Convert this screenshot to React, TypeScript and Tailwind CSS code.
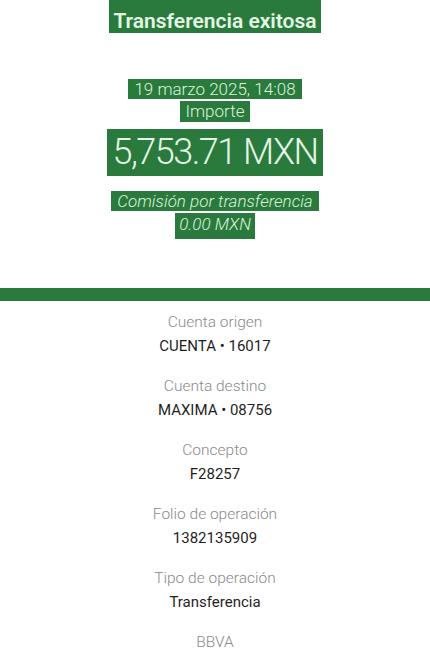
import React from 'react';

const details = [
  { label: 'Cuenta origen', value: 'CUENTA • 16017' },
  { label: 'Cuenta destino', value: 'MAXIMA • 08756' },
  { label: 'Concepto', value: 'F28257' },
  { label: 'Folio de operación', value: '1382135909' },
  { label: 'Tipo de operación', value: 'Transferencia' },
];

export default function App() {
  return (
    <div className="w-[430px] h-[661px] bg-white overflow-hidden flex flex-col items-center font-['Roboto',sans-serif]">
      {/* Header */}
      <span className="bg-[#2a7a3e] text-[#e4f6e4] px-[4px] pt-[10px] pb-[1px] text-[21px] leading-[22px] font-semibold">
        Transferencia exitosa
      </span>

      <span className="mt-[46px] bg-[#2a7a3e] text-[#dcf3dc] px-[6px] text-[17px] leading-[20px] font-light">
        19 marzo 2025, 14:08
      </span>
      <span className="mt-[2px] bg-[#2a7a3e] text-[#dcf3dc] px-[6px] text-[17px] leading-[21px] font-light">
        Importe
      </span>
      <span className="mt-[7px] bg-[#2a7a3e] text-[#e4f6e4] px-[5px] text-[36px] leading-[47px] font-light tracking-[-1.5px]">
        5,753.71 MXN
      </span>

      <span className="mt-[15px] bg-[#2a7a3e] text-[#dcf3dc] px-[6px] text-[17px] leading-[20px] font-light italic">
        Comisión por transferencia
      </span>
      <span className="mt-[2px] bg-[#2a7a3e] text-[#dcf3dc] px-[4px] pb-[4px] text-[17px] leading-[22px] font-light italic">
        0.00 MXN
      </span>

      {/* Divider bar */}
      <div className="mt-[49px] w-full h-[13px] bg-[#2a7a3e]" />

      {/* Details */}
      <div className="mt-[9px] flex flex-col items-center gap-[16px]">
        {details.map(d => (
          <div key={d.label} className="flex flex-col items-center">
            <span className="text-[15.5px] leading-[24px] text-[#8a8a8a] font-light">{d.label}</span>
            <span className="text-[15px] leading-[24px] text-[#1f1f1f]">{d.value}</span>
          </div>
        ))}
        <span className="text-[15.5px] leading-[24px] text-[#8a8a8a] font-light">BBVA</span>
      </div>
    </div>
  );
}
